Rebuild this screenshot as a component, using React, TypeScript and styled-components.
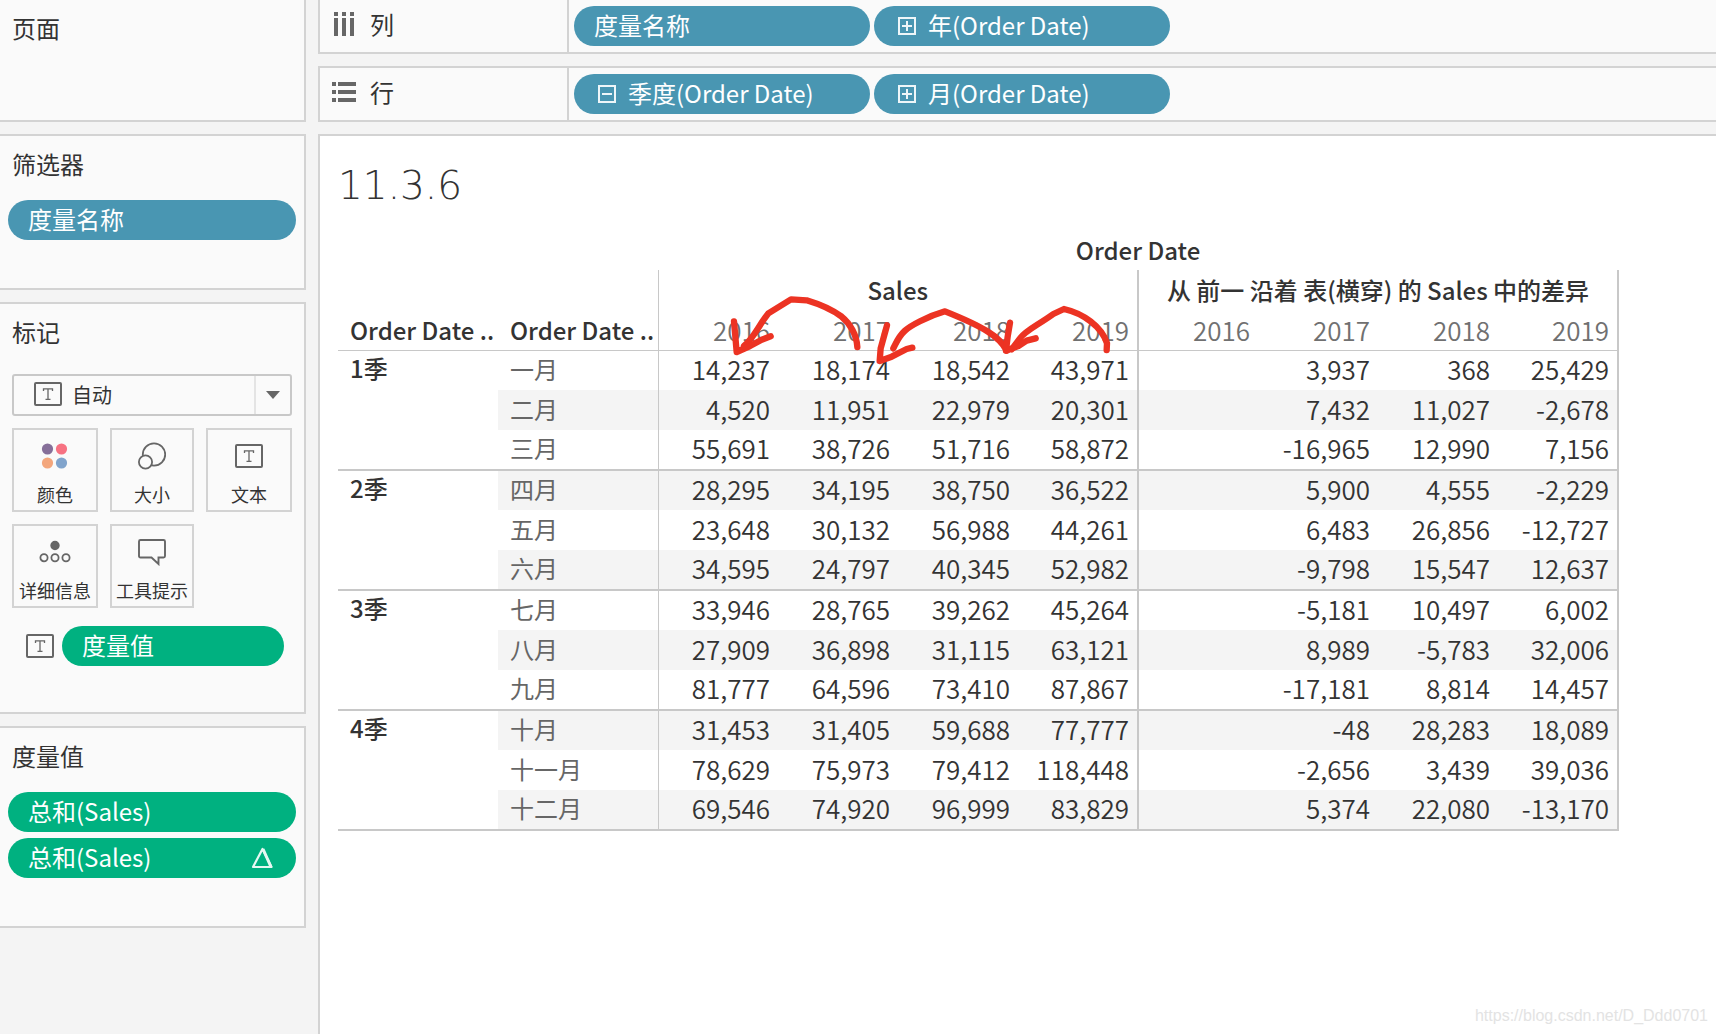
import React from "react";
import styled, { createGlobalStyle } from "styled-components";

const FONT = `"Noto Sans CJK SC", "Noto Sans", sans-serif`;
const LINE = "#d3d3d3";
const RULE = "#c8c8c8";
const INK = "#333333";
const ICON = "#666666";

const Global = createGlobalStyle`
  *, *::before, *::after { box-sizing: border-box; }
  body {
    margin: 0;
    background: #f4f4f4;
    color: ${INK};
    font-family: ${FONT};
    font-size: 24px;
    line-height: 32px;
  }
  button, select { font: inherit; color: inherit; }
`;

const Page = styled.div`
  display: flex;
  gap: 12px;
  min-height: 100vh;
  overflow: hidden;
`;

const Sidebar = styled.aside`
  flex: none;
  width: 306px;
  display: flex;
  flex-direction: column;
  gap: 12px;
`;

const Card = styled.section<{ $first?: boolean; $end?: number }>`
  background: #fafafa;
  border: 2px solid ${LINE};
  border-left: 0;
  border-top-width: ${(p) => (p.$first ? 0 : 2)}px;
  padding: 12px 8px ${(p) => p.$end ?? 48}px;
`;

const CardTitle = styled.h2`
  margin: 0 0 20px 4px;
  font-size: 24px;
  font-weight: 400;
  line-height: 32px;
`;

const PillList = styled.div`
  display: flex;
  flex-direction: column;
  gap: 6px;
`;

const PillButton = styled.button<{ $tone: "blue" | "green"; $wide?: boolean }>`
  display: flex;
  align-items: center;
  gap: 12px;
  height: 40px;
  width: ${(p) => (p.$wide ? "296px" : "auto")};
  padding: 0 20px;
  border: 0;
  border-radius: 20px;
  background: ${(p) => (p.$tone === "blue" ? "#4996b2" : "#00b180")};
  color: #ffffff;
  text-align: left;
  white-space: nowrap;
`;

const ExpandSvg = styled.svg`
  flex: none;
  margin-left: 4px;
`;

const PillText = styled.span`
  flex: 1;
  padding-bottom: 3px;
`;

const SelectWrap = styled.div`
  position: relative;
  margin: 26px 4px 12px;
`;

const Select = styled.select`
  display: block;
  width: 100%;
  height: 42px;
  padding: 0 40px 0 58px;
  border: 2px solid #c8c8c8;
  border-radius: 3px;
  background: #fafafa;
  appearance: none;
  font-size: 20px;
`;

const SelectIcon = styled.span`
  position: absolute;
  top: 8px;
  left: 22px;
  display: flex;
  pointer-events: none;
`;

const SelectArrow = styled.span`
  position: absolute;
  top: 2px;
  right: 2px;
  bottom: 2px;
  width: 36px;
  display: flex;
  align-items: center;
  justify-content: center;
  border-left: 2px solid #e4e4e4;
  pointer-events: none;
`;

const MarkGrid = styled.div`
  display: grid;
  grid-template-columns: 86fr 84fr 86fr;
  gap: 12px;
  margin: 0 4px 18px;
`;

const MarkButton = styled.button`
  display: flex;
  flex-direction: column;
  align-items: center;
  justify-content: space-between;
  height: 84px;
  padding: 12px 0 3px;
  border: 2px solid ${LINE};
  background: #fafafa;
  font-size: 18px;
  line-height: 26px;
  white-space: nowrap;
`;

const MarkIcon = styled.span`
  display: flex;
  align-items: center;
  height: 28px;
`;

const MarkRow = styled.div`
  display: flex;
  align-items: center;
  gap: 8px;
  padding: 0 12px 0 18px;

  button { flex: 1; }
`;

const Main = styled.main`
  flex: 1;
  min-width: 0;
  display: flex;
  flex-direction: column;
  gap: 12px;
`;

const Shelf = styled.section<{ $first?: boolean }>`
  display: flex;
  background: #fafafa;
  border: 2px solid ${LINE};
  border-right: 0;
  border-top-width: ${(p) => (p.$first ? 0 : 2)}px;
`;

const ShelfName = styled.h2`
  flex: none;
  display: flex;
  align-items: center;
  gap: 14px;
  width: 249px;
  margin: 0;
  padding: 0 0 4px 12px;
  border-right: 2px solid ${LINE};
  font-size: 24px;
  font-weight: 400;
`;

const ShelfPills = styled.div`
  display: flex;
  gap: 4px;
  padding: 6px 5px;
`;

const Canvas = styled.section`
  position: relative;
  flex: 1;
  padding: 20px 18px;
  background: #ffffff;
  border: 2px solid ${LINE};
  border-right: 0;
  border-bottom: 0;
`;

const SheetTitle = styled.h1`
  margin: 0 0 18px;
  font-family: "DejaVu Sans", sans-serif;
  font-size: 39px;
  font-weight: 200;
  line-height: 60px;
`;

const Sheet = styled.div`
  position: relative;
  width: max-content;
`;

const Table = styled.table`
  table-layout: fixed;
  width: 1280px;
  border-collapse: collapse;

  th, td { padding: 0 8px; white-space: nowrap; }
`;

const LabelCol = styled.col`
  width: 160px;
`;

const ValueCol = styled.col`
  width: 120px;
`;

const Row = styled.tr<{ $striped?: boolean; $groupEnd?: boolean }>`
  height: 40px;

  & > .band {
    padding-bottom: 3px;
    background: ${(p) => (p.$striped ? "#f4f4f4" : "transparent")};
    border-bottom: ${(p) => (p.$groupEnd ? `2px solid ${RULE}` : "0")};
  }
`;

const TopRow = styled.tr`
  height: 36px;
`;

const TopHead = styled.th`
  && { padding-bottom: 4px; }
  font-weight: 500;
`;

const GroupHead = styled.th<{ $last?: boolean }>`
  border-left: ${(p) => (p.$last ? 2 : 1)}px solid ${RULE};
  border-right: 2px solid ${RULE};
  font-weight: 500;
`;

const FieldHead = styled.th`
  && { padding: 0 0 0 12px; }
  border-bottom: 1px solid ${RULE};
  text-align: left;
  font-weight: 500;
`;

const YearHead = styled.th<{ $edge?: "left" | "right" }>`
  border-bottom: 1px solid ${RULE};
  border-left: ${(p) => (p.$edge === "left" ? `1px solid ${RULE}` : "0")};
  border-right: ${(p) => (p.$edge === "right" ? `2px solid ${RULE}` : "0")};
  text-align: right;
  font-size: 26px;
  font-weight: 350;
  color: #707070;
`;

const QuarterHead = styled.th`
  && { padding: 1px 12px; }
  border-bottom: 2px solid ${RULE};
  vertical-align: top;
  text-align: left;
  font-weight: 500;
`;

const MonthHead = styled.th`
  && { padding-left: 12px; }
  text-align: left;
  font-weight: 400;
  color: #666666;
`;

const Value = styled.td<{ $edge?: "left" | "right" }>`
  border-left: ${(p) => (p.$edge === "left" ? `1px solid ${RULE}` : "0")};
  border-right: ${(p) => (p.$edge === "right" ? `2px solid ${RULE}` : "0")};
  text-align: right;
  font-size: 26px;
  font-weight: 350;
`;

const Scribble = styled.svg`
  position: absolute;
  left: 302px;
  top: -14px;
  pointer-events: none;
`;

const Watermark = styled.span`
  position: absolute;
  right: 8px;
  bottom: 6px;
  font-family: "Liberation Sans", Arial, sans-serif;
  font-size: 16px;
  line-height: 24px;
  color: #e3e3e3;
`;

function TextIcon() {
  return (
    <svg width="28" height="24" viewBox="0 0 28 24" fill="none" stroke={ICON}>
      <rect x="1" y="1" width="26" height="22" rx="1" strokeWidth="2" />
      <path d="M9.5 9V6.8H18.5V9M14 6.8V17.2M11.5 17.3H16.5" strokeWidth="1.3" />
    </svg>
  );
}

function ColorIcon() {
  return (
    <svg width="28" height="28" viewBox="0 0 28 28">
      <circle cx="6.5" cy="7" r="5.6" fill="#866f99" />
      <circle cx="20.5" cy="7" r="5.6" fill="#f77282" />
      <circle cx="6.5" cy="21" r="5.6" fill="#f3a67c" />
      <circle cx="20.5" cy="21" r="5.6" fill="#81a4cc" />
    </svg>
  );
}

function SizeIcon() {
  return (
    <svg width="28" height="28" viewBox="0 0 28 28" stroke={ICON} strokeWidth="1.8" fill="#fafafa">
      <circle cx="16" cy="12.5" r="11.2" />
      <circle cx="7.5" cy="20" r="6.6" />
    </svg>
  );
}

function DetailIcon() {
  return (
    <svg width="32" height="28" viewBox="0 0 32 28" stroke={ICON} strokeWidth="1.8" fill="none">
      <circle cx="16" cy="7.5" r="3.8" fill={ICON} />
      <circle cx="5" cy="19.7" r="3.6" />
      <circle cx="16" cy="19.7" r="3.6" />
      <circle cx="27" cy="19.7" r="3.6" />
    </svg>
  );
}

function TooltipIcon() {
  return (
    <svg width="28" height="28" viewBox="0 0 28 28" stroke={ICON} strokeWidth="1.9" fill="none">
      <path d="M2.5 2H25.5Q27 2 27 3.5V18Q27 19.5 25.5 19.5H20.5V26L13.5 19.5H2.5Q1 19.5 1 18V3.5Q1 2 2.5 2Z" />
    </svg>
  );
}

function ColumnsIcon() {
  return (
    <svg width="24" height="24" viewBox="0 0 24 24" fill={ICON}>
      {[2, 10, 18].map((x) => (
        <path key={x} d={`M${x} 0h4v4h-4zM${x} 6h4v18h-4z`} />
      ))}
    </svg>
  );
}

function RowsIcon() {
  return (
    <svg width="24" height="24" viewBox="0 0 24 24" fill={ICON}>
      {[2, 10, 18].map((y) => (
        <path key={y} d={`M0 ${y}h4v4h-4zM6 ${y}h18v4h-18z`} />
      ))}
    </svg>
  );
}

type PillProps = {
  text: string;
  tone: "blue" | "green";
  wide?: boolean;
  expand?: "plus" | "minus";
  delta?: boolean;
};

function Pill({ text, tone, wide, expand, delta }: PillProps) {
  return (
    <PillButton type="button" $tone={tone} $wide={wide}>
      {expand && (
        <ExpandSvg width="18" height="18" viewBox="0 0 18 18" fill="none" stroke="#eef6f9" strokeWidth="2">
          <rect x="1" y="1" width="16" height="16" />
          <path d={expand === "plus" ? "M4 9H14M9 4V14" : "M4 9H14"} />
        </ExpandSvg>
      )}
      <PillText>{text}</PillText>
      {delta && (
        <svg width="26" height="24" viewBox="0 0 26 24" fill="none" stroke="#e6f8f2" strokeLinejoin="round">
          <path d="M3 21L12.5 3L21.5 21Z" strokeWidth="2.2" />
          <path d="M13 3L21 21" strokeWidth="3" />
        </svg>
      )}
    </PillButton>
  );
}

const years = ["2016", "2017", "2018", "2019"];

const quarters = [
  {
    name: "1季",
    months: [
      { name: "一月", values: ["14,237", "18,174", "18,542", "43,971", "", "3,937", "368", "25,429"] },
      { name: "二月", values: ["4,520", "11,951", "22,979", "20,301", "", "7,432", "11,027", "-2,678"] },
      { name: "三月", values: ["55,691", "38,726", "51,716", "58,872", "", "-16,965", "12,990", "7,156"] },
    ],
  },
  {
    name: "2季",
    months: [
      { name: "四月", values: ["28,295", "34,195", "38,750", "36,522", "", "5,900", "4,555", "-2,229"] },
      { name: "五月", values: ["23,648", "30,132", "56,988", "44,261", "", "6,483", "26,856", "-12,727"] },
      { name: "六月", values: ["34,595", "24,797", "40,345", "52,982", "", "-9,798", "15,547", "12,637"] },
    ],
  },
  {
    name: "3季",
    months: [
      { name: "七月", values: ["33,946", "28,765", "39,262", "45,264", "", "-5,181", "10,497", "6,002"] },
      { name: "八月", values: ["27,909", "36,898", "31,115", "63,121", "", "8,989", "-5,783", "32,006"] },
      { name: "九月", values: ["81,777", "64,596", "73,410", "87,867", "", "-17,181", "8,814", "14,457"] },
    ],
  },
  {
    name: "4季",
    months: [
      { name: "十月", values: ["31,453", "31,405", "59,688", "77,777", "", "-48", "28,283", "18,089"] },
      { name: "十一月", values: ["78,629", "75,973", "79,412", "118,448", "", "-2,656", "3,439", "39,036"] },
      { name: "十二月", values: ["69,546", "74,920", "96,999", "83,829", "", "5,374", "22,080", "-13,170"] },
    ],
  },
];

const marks = [
  { label: "颜色", icon: <ColorIcon /> },
  { label: "大小", icon: <SizeIcon /> },
  { label: "文本", icon: <TextIcon /> },
  { label: "详细信息", icon: <DetailIcon /> },
  { label: "工具提示", icon: <TooltipIcon /> },
];

const edgeOf = (i: number): "left" | "right" | undefined =>
  i === 0 ? "left" : i % 4 === 3 ? "right" : undefined;

function CrossTab() {
  return (
    <Table>
      <colgroup>
        <LabelCol />
        <LabelCol />
        {[0, 1, 2, 3, 4, 5, 6, 7].map((i) => (
          <ValueCol key={i} />
        ))}
      </colgroup>
      <thead>
        <TopRow>
          <td colSpan={2} />
          <TopHead colSpan={8}>Order Date</TopHead>
        </TopRow>
        <Row>
          <td colSpan={2} />
          <GroupHead colSpan={4}>Sales</GroupHead>
          <GroupHead colSpan={4} $last>从 前一 沿着 表(横穿) 的 Sales 中的差异</GroupHead>
        </Row>
        <Row>
          <FieldHead scope="col">Order Date ..</FieldHead>
          <FieldHead scope="col">Order Date ..</FieldHead>
          {[...years, ...years].map((year, i) => (
            <YearHead key={i} scope="col" $edge={edgeOf(i)}>{year}</YearHead>
          ))}
        </Row>
      </thead>
      <tbody>
        {quarters.map((quarter, q) =>
          quarter.months.map((month, m) => (
            <Row key={month.name} $striped={(q * 3 + m) % 2 === 1} $groupEnd={m === 2}>
              {m === 0 && <QuarterHead rowSpan={3} scope="rowgroup">{quarter.name}</QuarterHead>}
              <MonthHead className="band" scope="row">{month.name}</MonthHead>
              {month.values.map((value, i) => (
                <Value key={i} className="band" $edge={edgeOf(i)}>{value}</Value>
              ))}
            </Row>
          ))
        )}
      </tbody>
    </Table>
  );
}

export default function App() {
  return (
    <Page>
      <Global />
      <Sidebar>
        <Card $first $end={56}>
          <CardTitle>页面</CardTitle>
        </Card>
        <Card>
          <CardTitle>筛选器</CardTitle>
          <PillList>
            <Pill tone="blue" text="度量名称" />
          </PillList>
        </Card>
        <Card $end={46}>
          <CardTitle>标记</CardTitle>
          <SelectWrap>
            <Select aria-label="标记">
              <option>自动</option>
            </Select>
            <SelectIcon><TextIcon /></SelectIcon>
            <SelectArrow>
              <svg width="14" height="8" viewBox="0 0 14 8" fill={ICON}>
                <path d="M0 0H14L7 8Z" />
              </svg>
            </SelectArrow>
          </SelectWrap>
          <MarkGrid>
            {marks.map((mark) => (
              <MarkButton key={mark.label} type="button">
                <MarkIcon>{mark.icon}</MarkIcon>
                <span>{mark.label}</span>
              </MarkButton>
            ))}
          </MarkGrid>
          <MarkRow>
            <TextIcon />
            <Pill tone="green" text="度量值" />
          </MarkRow>
        </Card>
        <Card>
          <CardTitle>度量值</CardTitle>
          <PillList>
            <Pill tone="green" text="总和(Sales)" />
            <Pill tone="green" text="总和(Sales)" delta />
          </PillList>
        </Card>
      </Sidebar>
      <Main>
        <Shelf $first>
          <ShelfName><ColumnsIcon />列</ShelfName>
          <ShelfPills>
            <Pill tone="blue" wide text="度量名称" />
            <Pill tone="blue" wide expand="plus" text="年(Order Date)" />
          </ShelfPills>
        </Shelf>
        <Shelf>
          <ShelfName><RowsIcon />行</ShelfName>
          <ShelfPills>
            <Pill tone="blue" wide expand="minus" text="季度(Order Date)" />
            <Pill tone="blue" wide expand="plus" text="月(Order Date)" />
          </ShelfPills>
        </Shelf>
        <Canvas>
          <SheetTitle>11.3.6</SheetTitle>
          <Sheet>
            <CrossTab />
            <Scribble
              width="520"
              height="200"
              viewBox="0 0 1560 600"
              fill="none"
              stroke="#ec3323"
              strokeWidth="19"
              strokeLinecap="round"
              strokeLinejoin="round"
            >
              <path d="M652 381C650 345 630 310 605 290C575 268 530 250 500 241L453 238L385 280C350 325 345 350 312 378" />
              <path d="M282 304L290 396L330 378L365 359L392 349" />
              <path d="M1100 392C1080 350 1030 320 915 274C860 290 810 318 795 332C775 350 768 370 760 385" />
              <path d="M741 316L722 385L719 423L755 410L800 387L817 383" />
              <path d="M1400 390L1401 370C1385 320 1330 280 1272 267L1240 282C1190 318 1158 330 1140 355L1115 388" />
              <path d="M1110 308L1103 350L1098 392L1135 378L1160 362L1187 355" />
            </Scribble>
          </Sheet>
          <Watermark>https://blog.csdn.net/D_Ddd0701</Watermark>
        </Canvas>
      </Main>
    </Page>
  );
}
